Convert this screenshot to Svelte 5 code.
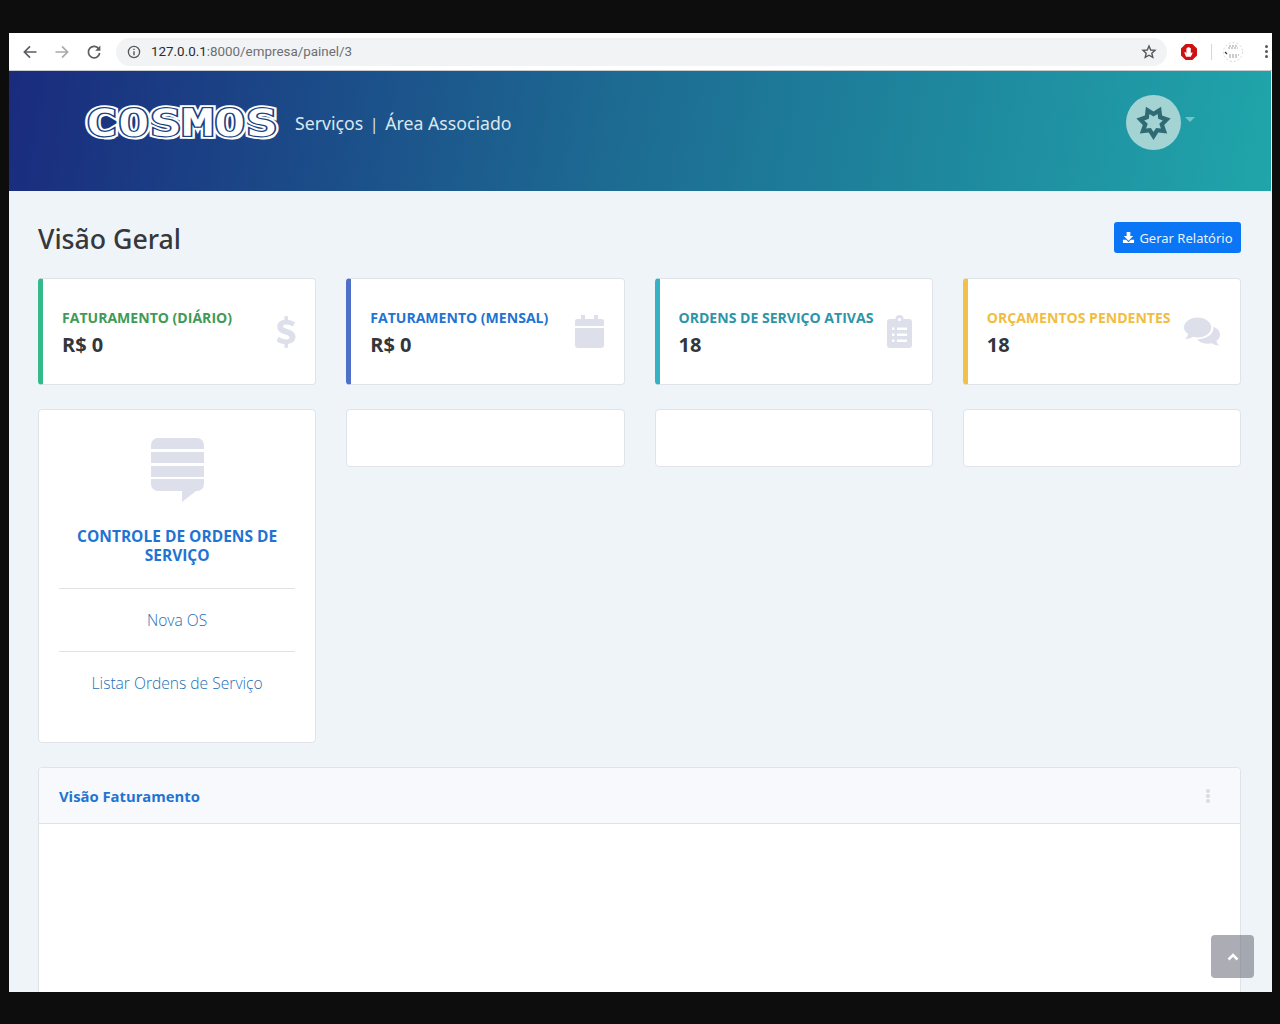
<script>
  const stats = [
    { label: "FATURAMENTO (DIÁRIO)", value: "R$ 0", tone: "green", icon: "dollar" },
    { label: "FATURAMENTO (MENSAL)", value: "R$ 0", tone: "blue", icon: "calendar" },
    { label: "ORDENS DE SERVIÇO ATIVAS", value: "18", tone: "teal", icon: "clipboard" },
    { label: "ORÇAMENTOS PENDENTES", value: "18", tone: "yellow", icon: "comments" },
  ];

  // seven pointed star, one point straight down
  function star(cx, cy, outer, inner) {
    const pts = [];
    for (let i = 0; i < 14; i++) {
      const a = Math.PI / 2 + (i * Math.PI) / 7;
      const r = i % 2 ? inner : outer;
      pts.push(`${(cx + r * Math.cos(a)).toFixed(1)} ${(cy + r * Math.sin(a)).toFixed(1)}`);
    }
    return "M" + pts.join("L") + "z";
  }

  const badge = star(27.5, 27.5, 17.5, 11) + star(27.5, 27.5, 9.5, 6);
</script>

<div class="screen">
  <div class="window">
    <div class="toolbar">
      <svg class="nav" viewBox="0 0 16 16" width="16" height="16"><path d="M14.5 8H2.8M8 2.4 2.4 8 8 13.6" fill="none" stroke="#5a5d61" stroke-width="1.7" /></svg>
      <svg class="nav" viewBox="0 0 16 16" width="16" height="16"><path d="M1.5 8h11.7M8 2.4 13.6 8 8 13.6" fill="none" stroke="#a9abae" stroke-width="1.7" /></svg>
      <svg class="nav last" viewBox="0 0 16 16" width="16" height="16"><path d="M13 5.2A5.7 5.7 0 1 0 13.7 9" fill="none" stroke="#5a5d61" stroke-width="1.7" /><path d="M14.4 1.6v5.2H9.2z" fill="#5a5d61" /></svg>
      <div class="omnibox">
        <svg viewBox="0 0 14 14" width="14" height="14"><circle cx="7" cy="7" r="5.6" fill="none" stroke="#55585c" stroke-width="1.3" /><path d="M7 6.2v4M7 3.7v1.3" stroke="#55585c" stroke-width="1.4" /></svg>
        <span class="url"><b>127.0.0.1</b>:8000/empresa/painel/3</span>
        <svg class="star" viewBox="0 0 16 16" width="16" height="16"><path d="m8 2 1.7 4 4.3.4-3.2 2.8 1 4.2L8 11.2l-3.800 2.200 1-4.200L2 6.400 6.300 6z" fill="none" stroke="#55585c" stroke-width="1.4" /></svg>
      </div>
      <svg class="stop" viewBox="0 0 18 18" width="18" height="18"><path d="M5.6 1h6.800L17 5.600v6.800L12.400 17H5.600L1 12.400V5.600z" fill="#cf1111" /><path d="M6 13.800 4.300 9.400l1-.5L6.400 10.500V5.200h1.100V9V4.200h1.100V9V4.200h1.100V9V5h1.100v5.500l.9-1.300 1 .5-1.900 4.100z" fill="#fff" /></svg>
      <span class="divider"></span>
      <svg class="profile" viewBox="0 0 22 22" width="22" height="22">
        <circle cx="11" cy="11" r="9.500" fill="#fff" stroke="#d8d8d8" stroke-dasharray="2 2" />
        <path d="M7 5h9M6 7h10M7 14h10M7 16h9" stroke="#9a9a9a" stroke-width="1" stroke-dasharray="2 1" />
        <path d="M3 11l2 2" stroke="#333" stroke-width="1.200" />
      </svg>
      <span class="dots"><i></i><i></i><i></i></span>
    </div>

    <header class="banner">
      <div class="brand">
        <span class="logo" data-text="COSMOS">COSMOS</span>
        <span class="tagline">Serviços <span class="bar">|</span> Área Associado</span>
      </div>
      <div class="account">
        <span class="avatar">
          <svg viewBox="0 0 55 55" width="55" height="55"><path d={badge} fill="#2f6b74" fill-rule="evenodd" /></svg>
        </span>
        <span class="caret"></span>
      </div>
    </header>

    <main class="page">
      <div class="title-row">
        <h1>Visão Geral</h1>
        <button type="button" class="report">
          <svg viewBox="0 0 14 14" width="13" height="13"><path d="M5 1h4v4.500h3L7 10.500 2 5.500h3z" fill="#fff" /><path d="M1 9.500h3.500L7 12l2.500-2.500H13V13H1z" fill="#fff" /></svg>
          Gerar Relatório
        </button>
      </div>

      <section class="grid">
        {#each stats as s}
          <article class="card stat {s.tone}">
            <div class="stat-text">
              <div class="stat-label">{s.label}</div>
              <div class="stat-value">{s.value}</div>
            </div>
            {#if s.icon === "dollar"}
              <svg class="stat-icon dollar" viewBox="3 3 18 30" width="19" height="32"><path d="M13.500 3v3.600c2.500.2 4.600 1 6.600 2.200l-2 4c-1.900-1.100-4.200-2-6.400-2-1.800 0-2.900.6-2.900 1.800 0 1.400 1.800 1.900 4.400 2.800 3.700 1.200 7.300 2.900 7.300 7.200 0 3.900-2.700 6.200-7 6.800V33h-3.500v-3.500c-2.900-.3-5.500-1.300-7.500-2.900l2.200-4c1.900 1.500 4.600 2.600 7 2.600 2 0 3.200-.7 3.200-2 0-1.500-1.800-2.100-4.500-3C6.600 19 3.300 17.200 3.300 13c0-3.600 2.600-6 6.700-6.500V3z" fill="#dddfeb" /></svg>
            {:else if s.icon === "calendar"}
              <svg class="stat-icon" viewBox="0 0 29 33" width="29" height="33"><path d="M6 0h4v4h9V0h4v4h4a2 2 0 0 1 2 2v5H0V6a2 2 0 0 1 2-2h4zM0 13h29v17a3 3 0 0 1-3 3H3a3 3 0 0 1-3-3z" fill="#dddfeb" /></svg>
            {:else if s.icon === "clipboard"}
              <svg class="stat-icon" viewBox="0 0 25 33" width="25" height="33"><path fill-rule="evenodd" d="M12.500 0a4 4 0 0 1 4 4H22a3 3 0 0 1 3 3v23a3 3 0 0 1-3 3H3a3 3 0 0 1-3-3V7a3 3 0 0 1 3-3h5.500a4 4 0 0 1 4-4zm0 3a1.600 1.600 0 1 0 0 3.200 1.600 1.600 0 0 0 0-3.200zM5 12.500v2.500h2.500v-2.500zm5 0v2.500h10v-2.500zM5 18.500V21h2.500v-2.500zm5 0V21h10v-2.500zM5 24.500V27h2.500v-2.500zm5 0V27h10v-2.500z" fill="#dddfeb" /></svg>
            {:else}
              <svg class="stat-icon" viewBox="0 0 37 29" width="36" height="29"><path d="M14 0c7.700 0 14 4.600 14 10.300s-6.300 10.300-14 10.300c-1.700 0-3.300-.2-4.800-.6C7.200 21.500 4 22.300.8 22.300c1.700-1.400 3-3.300 3.400-5.300C1.600 15.100 0 12.800 0 10.300 0 4.600 6.300 0 14 0z" fill="#dddfeb" /><path d="M30.300 9.500c3.900 1.600 6.700 4.600 6.700 8.300 0 2.500-1.400 4.700-3.700 6.400.4 1.900 1.700 3.600 3.300 4.800-3 0-5.900-.8-8-2.300-1.300.3-2.600.5-4 .5-4.600 0-8.700-1.800-11-4.500 9.500-.1 17.400-5.600 16.700-12.700z" fill="#dddfeb" /></svg>
            {/if}
          </article>
        {/each}
      </section>

      <section class="grid second">
        <article class="card module">
          <svg class="module-icon" viewBox="0 0 53 64" width="53" height="64">
            <path d="M0 7a7 7 0 0 1 7-7h39a7 7 0 0 1 7 7v4H0zM0 14h53v11H0zM0 28h53v11H0zM0 41h53v5a7 7 0 0 1-7 7h-1L31 64V53H7a7 7 0 0 1-7-7z" fill="#dddfeb" />
          </svg>
          <h2>CONTROLE DE ORDENS DE SERVIÇO</h2>
          <a href="#nova">Nova OS</a>
          <a href="#listar">Listar Ordens de Serviço</a>
        </article>
        <div class="card blank"></div>
        <div class="card blank"></div>
        <div class="card blank"></div>
      </section>

      <section class="card panel">
        <div class="panel-head">
          <h3>Visão Faturamento</h3>
          <span class="panel-dots"><i></i><i></i><i></i></span>
        </div>
        <div class="panel-body"></div>
      </section>
    </main>

    <a class="to-top" href="#top" aria-label="Voltar ao topo">
      <svg viewBox="0 0 12 8" width="12" height="8"><path d="M1.500 6.500 6 2l4.500 4.500" fill="none" stroke="#fff" stroke-width="2.600" /></svg>
    </a>
  </div>
</div>

<style>
  :global(body) {
    background: #0d0d0d;
  }

  .screen {
    height: 1024px;
    padding: 33px 8px 32px 9px;
    box-sizing: border-box;
    background: #0d0d0d;
    overflow: hidden;
    font-family: "Open Sans", "Noto Sans", sans-serif;
  }

  .window {
    position: relative;
    height: 959px;
    overflow: hidden;
    background: #eff4f8;
  }

  .toolbar {
    height: 38px;
    display: flex;
    align-items: center;
    background: #fff;
    box-sizing: border-box;
    border-bottom: 1px solid #c9ccd0;
    padding-left: 13px;
  }

  .nav {
    margin-right: 16px;
    flex: none;
  }

  .nav.last {
    margin-right: 14px;
  }

  .omnibox {
    width: 1051px;
    height: 28px;
    display: flex;
    align-items: center;
    gap: 10px;
    padding: 0 10px 0 11px;
    box-sizing: border-box;
    border-radius: 14px;
    background: #f1f3f4;
    font-family: "Roboto", sans-serif;
    font-size: 13.400px;
    color: #6c6f73;
  }

  .url {
    flex: 1;
  }

  .url b {
    font-weight: 400;
    color: #2b2d30;
  }

  .stop {
    margin-left: 13px;
  }

  .divider {
    width: 1px;
    height: 16px;
    margin: 0 10px 0 13px;
    background: #d5d7da;
  }

  .dots {
    margin-left: 21px;
    display: flex;
    flex-direction: column;
    gap: 2px;
  }

  .dots i {
    width: 3px;
    height: 3px;
    border-radius: 50%;
    background: #55585c;
  }

  .banner {
    height: 120px;
    margin-right: 1px;
    display: flex;
    align-items: center;
    justify-content: space-between;
    padding: 0 76px 0 78px;
    box-sizing: border-box;
    background: linear-gradient(100deg, #1a2b7e 0%, #1d6d93 50%, #20a5aa 100%);
  }

  .brand {
    display: flex;
    align-items: center;
    gap: 15px;
    margin-top: -16px;
  }

  .logo {
    position: relative;
    isolation: isolate;
    display: block;
    height: 36px;
    font-family: "DejaVu Sans Mono", monospace;
    font-size: 35px;
    line-height: 36px;
    letter-spacing: 1.800px;
    white-space: nowrap;
    color: #1b3f82;
    -webkit-text-stroke: 4px #1b3f82;
    transform-origin: left center;
    transform: scaleX(1.400);
    width: 141px;
    margin-right: 52px;
  }

  .logo::before,
  .logo::after {
    content: attr(data-text);
    position: absolute;
    left: 0;
    top: 0;
  }

  .logo::before {
    z-index: -1;
    color: #fff;
    -webkit-text-stroke: 7.500px #fff;
    text-shadow: 2px 4px 0 #fff;
  }

  .logo::after {
    color: #fff;
    -webkit-text-stroke: 1.500px #fff;
  }

  .tagline {
    font-family: "Noto Sans", sans-serif;
    font-size: 17.700px;
    color: #dbe7ee;
    white-space: nowrap;
  }

  .bar {
    margin: 0 2px;
    font-size: 16px;
  }

  .account {
    display: flex;
    align-items: center;
    gap: 4px;
    margin-top: -17px;
  }

  .avatar {
    width: 55px;
    height: 55px;
    border-radius: 50%;
    display: block;
    background: #a3d3d3;
  }

  .avatar svg {
    display: block;
  }

  .caret {
    margin-bottom: 6px;
    border-top: 5px solid #74c3c9;
    border-left: 5px solid transparent;
    border-right: 5px solid transparent;
  }

  .page {
    padding: 0 31px 0 29px;
  }

  .title-row {
    display: flex;
    align-items: center;
    justify-content: space-between;
    height: 87px;
    padding-top: 8px;
    box-sizing: border-box;
  }

  h1 {
    margin: 0;
    font-size: 26.700px;
    font-weight: 500;
    color: #35383c;
    font-family: "Noto Sans", sans-serif;
  }

  .report {
    width: 127px;
    height: 31px;
    margin-top: -2px;
    display: flex;
    align-items: center;
    justify-content: center;
    gap: 4px;
    padding: 0;
    border: 0;
    border-radius: 3px;
    background: #0a76f5;
    color: #e8f2ff;
    font-family: "Noto Sans", sans-serif;
    font-size: 13px;
  }

  .grid {
    display: grid;
    grid-template-columns: repeat(4, 1fr);
    column-gap: 30px;
    margin-bottom: 24px;
  }

  .second {
    align-items: start;
  }

  .card {
    box-sizing: border-box;
    background: #fff;
    border: 1px solid #e0e3e9;
    border-radius: 4px;
  }

  .stat {
    height: 107px;
    display: flex;
    align-items: center;
    justify-content: space-between;
    padding: 0 20px 0 19px;
    border-left-width: 5px;
  }

  .stat.green { border-left-color: #36b98a; }
  .stat.blue { border-left-color: #4f70c8; }
  .stat.teal { border-left-color: #36b1c4; }
  .stat.yellow { border-left-color: #f2c14b; }

  .stat-text {
    margin-top: 3px;
  }

  .stat-label {
    font-size: 14.050px;
    font-weight: 700;
    line-height: 18px;
    white-space: nowrap;
  }

  .green .stat-label { color: #3f9a57; }
  .blue .stat-label { color: #1f74d2; }
  .teal .stat-label { color: #2e94a8; }
  .yellow .stat-label { color: #f2bd3f; }

  .stat-value {
    margin-top: 5px;
    font-size: 20px;
    font-weight: 700;
    line-height: 26px;
    color: #33363b;
  }

  .stat-icon {
    flex: none;
  }

  .stat-icon.dollar {
    margin-right: -1px;
  }

  .blank {
    height: 58px;
  }

  .module {
    height: 334px;
    display: flex;
    flex-direction: column;
    align-items: center;
    padding: 28px 20px 0;
  }

  .module-icon {
    flex: none;
  }

  .module h2 {
    margin: 25px 0 12px;
    padding-bottom: 23px;
    width: 100%;
    border-bottom: 1px solid #e0e3e6;
    text-align: center;
    font-size: 15.500px;
    line-height: 19px;
    font-weight: 700;
    color: #1f74d2;
  }

  .module a {
    width: 100%;
    text-align: center;
    font-size: 15.600px;
    line-height: 20px;
    font-weight: 300;
    color: #1d6fb5;
    text-decoration: none;
    padding: 9px 0 21px;
  }

  .module a + a {
    border-top: 1px solid #e0e3e6;
    padding-top: 21px;
  }

  .panel {
    height: 400px;
  }

  .panel-head {
    height: 56px;
    box-sizing: border-box;
    display: flex;
    align-items: center;
    justify-content: space-between;
    padding: 0 30px 0 20px;
    background: #f8f9fc;
    border-bottom: 1px solid #e0e3e6;
    border-radius: 4px 4px 0 0;
  }

  h3 {
    margin: 0;
    font-size: 14.800px;
    font-weight: 700;
    color: #1f74d2;
  }

  .panel-dots {
    display: flex;
    flex-direction: column;
    gap: 1px;
  }

  .panel-dots i {
    width: 4px;
    height: 4px;
    border-radius: 50%;
    background: #d8dbe0;
  }

  .to-top {
    position: absolute;
    left: 1202px;
    top: 902px;
    width: 43px;
    height: 43px;
    display: flex;
    align-items: center;
    justify-content: center;
    border-radius: 4px;
    background: rgba(90, 92, 105, 0.5);
  }
</style>
